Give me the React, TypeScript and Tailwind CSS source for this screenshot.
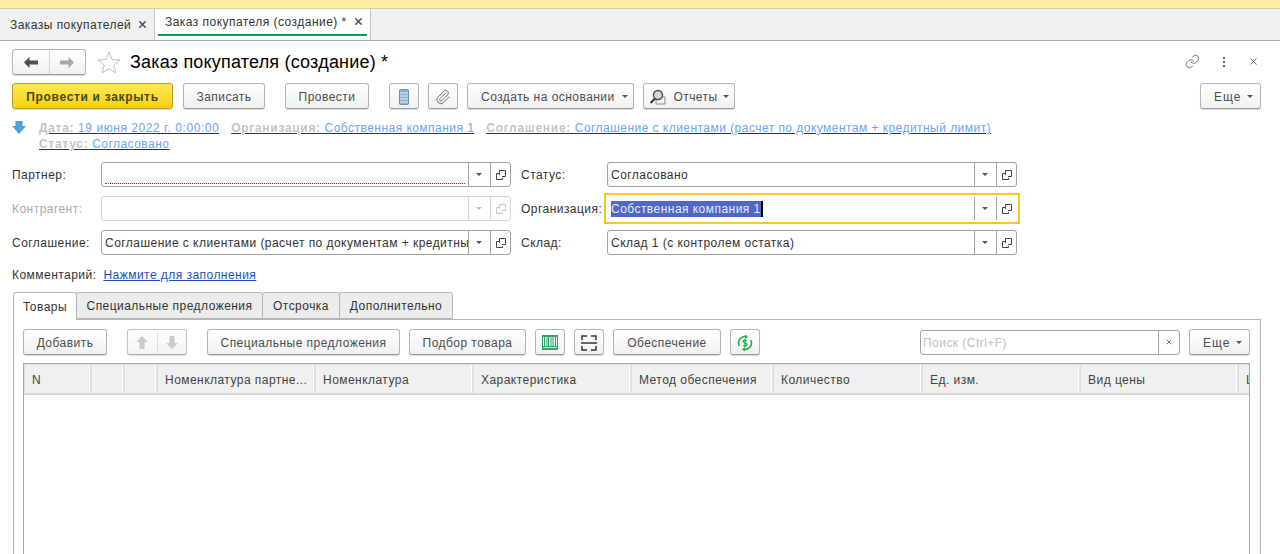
import React from "react";
import { Link, Paperclip, X } from "lucide-react";

const btn =
	"flex h-[26px] shrink-0 items-center justify-center rounded-[3px] border border-[#b5b5b5] border-b-[#9a9a9a] bg-gradient-to-b from-white to-[#f1f1f1] pt-px text-[#4d4d4d] shadow-[0_1px_1px_rgba(0,0,0,0.15)]";

function Caret({ className = "border-t-[#555]" }: { className?: string }) {
	return (
		<span
			className={`h-0 w-0 border-x-[3.5px] border-t-[3.5px] border-x-transparent ${className}`}
		/>
	);
}

function OpenIcon({ muted = false }: { muted?: boolean }) {
	const c = muted ? "#c4c4c4" : "#444";
	return (
		<svg width="10" height="10" viewBox="0 0 10 10" fill="none" stroke={c}>
			<path d="M3.500 5V.5h6v6H6" />
			<path d="M3 3.500H.5v6h6V8" />
		</svg>
	);
}

function Field({
	value,
	muted,
	required,
	focused,
}: {
	value?: string;
	muted?: boolean;
	required?: boolean;
	focused?: boolean;
}) {
	const frame = focused
		? "rounded-none border-transparent outline-2 outline-offset-[1px] outline-[#f9c81d]"
		: muted
			? "rounded-[3px] border-[#d6d6d6]"
			: "rounded-[3px] border-[#a3a3a3]";
	const sep = muted ? "border-[#d6d6d6]" : "border-[#a3a3a3]";
	return (
		<div
			className={`flex h-[25px] w-[410px] shrink-0 items-stretch border bg-white ${frame}`}
		>
			<div className="relative flex min-w-0 flex-1 items-center overflow-hidden pl-[3px] pr-[2px] whitespace-nowrap">
				{focused ? (
					<span className="border-r-2 border-black bg-[#5068c2] leading-[16px] text-[#e6e9f7]">
						{value}
					</span>
				) : (
					<span>{value}</span>
				)}
				{required && (
					<span className="absolute right-[3px] bottom-[2px] left-[3px] border-b border-dotted border-[#e02020]" />
				)}
			</div>
			<div className={`flex w-[22px] shrink-0 items-center justify-center border-l pr-px ${sep}`}>
				<Caret className={muted ? "border-t-[#bdbdbd]" : "border-t-[#555]"} />
			</div>
			<div className={`flex w-[20px] shrink-0 items-center justify-center border-l ${sep}`}>
				<OpenIcon muted={muted} />
			</div>
		</div>
	);
}

function DocIcon() {
	return (
		<svg width="10" height="16" viewBox="0 0 10 16">
			<rect x="0.5" y="0.5" width="9" height="15" rx="1" fill="#8fb3cf" stroke="#6d8ea8" />
			<path d="M1 4h8M1 7h8M1 10h8M1 13h8" stroke="#e4edf4" />
		</svg>
	);
}

function ReportIcon() {
	return (
		<svg width="18" height="16" viewBox="0 0 18 16" fill="none">
			<path d="M9 8h7v7H7v-4" fill="#f2f2f2" stroke="#8a8a8a" />
			<circle cx="9" cy="6" r="4.500" fill="#cfd8c9" stroke="#4b4b4b" strokeWidth="1.400" />
			<path d="M6 9.500 1.500 14" stroke="#333" strokeWidth="2" />
		</svg>
	);
}

function BarcodeIcon() {
	return (
		<svg width="16" height="15" viewBox="0 0 16 15">
			<rect width="16" height="15" fill="#2fa36b" />
			<rect x="1" y="2" width="14" height="9" fill="#f2faf5" />
			<path d="M2.500 2v9M5 2v9M6.500 2v9M9 2v9M11 2v9M13.500 2v9" stroke="#2fa36b" strokeWidth="1" />
			<path d="M1 12.500h14" stroke="#bfe6cf" />
		</svg>
	);
}

function ScanIcon() {
	return (
		<svg width="16" height="16" viewBox="0 0 16 16" fill="none" stroke="#333" strokeWidth="1.500">
			<path d="M1 5V1h5M10 1h5v4M0 8h16M1 11v4h5M10 15h5v-4" />
		</svg>
	);
}

function MoneyIcon() {
	return (
		<svg width="16" height="16" viewBox="0 0 16 16" fill="none" stroke="#1fae45" strokeWidth="1.600">
			<path d="M2.300 11A6.500 6.500 0 0 1 9 1.600" />
			<path d="M13.700 5A6.500 6.500 0 0 1 7 14.400" />
			<path d="M8 0l2.500 1.800L8 3.600M8 12.400l-2.500 1.800L8 16" fill="#1fae45" strokeWidth="0.800" />
			<path d="M10 5.600C9.500 4.900 6 4.600 6 6.400 6 8.200 10 7.600 10 9.600 10 11.300 6.600 11.100 6 10.400M8 3.800v8.400" strokeWidth="1.300" />
		</svg>
	);
}

function ArrowH({ dir, color }: { dir: "left" | "right"; color: string }) {
	return (
		<svg width="14" height="11" viewBox="0 0 14 11" fill={color}>
			{dir === "left" ? (
				<path d="M0 5.500 5.500 0v3.500H14v4H5.500V11z" />
			) : (
				<path d="M14 5.500 8.500 0v3.500H0v4h8.500V11z" />
			)}
		</svg>
	);
}

function ArrowV({ dir }: { dir: "up" | "down" }) {
	return (
		<svg width="12" height="13" viewBox="0 0 12 13" fill="#b9c0c4">
			{dir === "up" ? (
				<path d="M6 0l6 6H8.500v7h-5V6H0z" />
			) : (
				<path d="M6 13l6-6H8.500V0h-5v7H0z" />
			)}
		</svg>
	);
}

const columns: [string, number][] = [
	["N", 67],
	["", 33],
	["", 33],
	["Номенклатура партне...", 158],
	["Номенклатура", 158],
	["Характеристика", 158],
	["Метод обеспечения", 142],
	["Количество", 149],
	["Ед. изм.", 158],
	["Вид цены", 158],
	["Цена", 40],
];

function InfoPair({ label, value, wide }: { label: string; value: string; wide?: boolean }) {
	return (
		<span className="underline">
			<span className="font-bold tracking-[0.7px] text-[#c4c4c4]">{label}</span>{" "}
			<span className={wide ? "tracking-[0.55px] text-[#6ba4f8]" : "text-[#6ba4f8]"}>{value}</span>
		</span>
	);
}

export default function App() {
	return (
		<div
			className="flex h-[554px] w-[1280px] flex-col overflow-hidden bg-white text-[12px] tracking-[0.46px] text-[#333]"
			style={{ fontFamily: '"Liberation Sans", Arial, sans-serif' }}
		>
			<div className="h-[9px] shrink-0 border-b border-[#d9cf9c] bg-[#fdeea2]" />

			{/* открытые окна */}
			<div className="flex h-[32px] shrink-0 border-b border-[#a8a8a8] bg-[#f0f0f0]">
				<div className="flex w-[155px] items-center border-r border-[#c4c4c4] pl-[10px]">
					<span>Заказы покупателей</span>
					<X size={11} strokeWidth={3} className="ml-[6px] text-[#444]" />
				</div>
				<div className="flex w-[216px] flex-col border-r border-[#c4c4c4] bg-white">
					<div className="flex flex-1 items-center pl-[10px]">
						<span>Заказ покупателя (создание) *</span>
						<X size={11} strokeWidth={3} className="ml-[6px] text-[#444]" />
					</div>
					<div className="mx-[3px] mb-[4px] h-[2px] bg-[#0e9a52]" />
				</div>
			</div>

			<div className="flex min-h-0 flex-1 flex-col pr-[19px] pl-[12px]">
				{/* заголовок */}
				<div className="mt-[8px] flex h-[25px] shrink-0 items-center">
					<div className={`${btn} h-[25px] w-[74px]`}>
						<div className="flex h-full flex-1 items-center justify-center">
							<ArrowH dir="left" color="#4f4f4f" />
						</div>
						<div className="flex h-full flex-1 items-center justify-center border-l border-[#d5d5d5]">
							<ArrowH dir="right" color="#a8a8a8" />
						</div>
					</div>
					<svg className="ml-[11px]" width="24" height="22" viewBox="0 0 24 22" fill="white" stroke="#bdbdbd">
						<path d="M12 1l3 7.500 8 .6-6.200 5 2 7.900L12 17.600 5.200 22l2-7.900-6.200-5 8-.6z" />
					</svg>
					<h1 className="ml-[9px] text-[18px] leading-none tracking-[0.2px] text-black">
						Заказ покупателя (создание) *
					</h1>
					<div className="ml-auto flex items-center text-[#555]">
						<Link size={15} strokeWidth={1.300} />
						<div className="ml-[23px] flex flex-col gap-[2px]">
							<span className="h-[2px] w-[2px] bg-[#666]" />
							<span className="h-[2px] w-[2px] bg-[#666]" />
							<span className="h-[2px] w-[2px] bg-[#666]" />
						</div>
						<X size={11} strokeWidth={1.800} className="mr-[2px] ml-[23px]" />
					</div>
				</div>

				{/* команды */}
				<div className="mt-[9px] flex shrink-0 items-center">
					<button className="flex h-[26px] w-[161px] items-center justify-center rounded-[3px] border border-[#b59f2c] bg-gradient-to-b from-[#ffe94f] to-[#f5d000] pt-px font-bold tracking-[0.67px] text-[#4a4a20] shadow-[0_1px_1px_rgba(0,0,0,0.15)]">
						Провести и закрыть
					</button>
					<button className={`${btn} ml-[10px] w-[82px]`}>Записать</button>
					<button className={`${btn} ml-[20px] w-[84px]`}>Провести</button>
					<button className={`${btn} ml-[20px] w-[30px]`}>
						<DocIcon />
					</button>
					<button className={`${btn} ml-[9px] w-[30px]`}>
						<Paperclip size={16} strokeWidth={1.200} className="text-[#555]" />
					</button>
					<button className={`${btn} ml-[9px] w-[167px] !justify-start gap-[7px] pl-[13px]`}>
						<span>Создать на основании</span>
						<Caret />
					</button>
					<button className={`${btn} ml-[9px] w-[92px]`}>
						<ReportIcon />
						<span className="ml-[6px]">Отчеты</span>
						<span className="ml-[5px] flex">
							<Caret />
						</span>
					</button>
					<button className={`${btn} ml-auto w-[61px] !justify-start gap-[6px] pl-[13px]`}>
						<span className="tracking-[1px]">Еще</span>
						<Caret />
					</button>
				</div>

				{/* шапка документа */}
				<div className="mt-[11px] flex shrink-0">
					<svg className="mt-[1px] shrink-0" width="14" height="13" viewBox="0 0 14 13" fill="#4ba3e3">
						<path d="M3.500 0h7v5H14l-7 8-7-8h3.500z" />
					</svg>
					<div className="ml-[13px] leading-[16px]">
						<div className="flex gap-[12px]">
							<InfoPair label="Дата:" value="19 июня 2022 г. 0:00:00" wide />
							<InfoPair label="Организация:" value="Собственная компания 1" />
							<InfoPair label="Соглашение:" value="Соглашение с клиентами (расчет по документам + кредитный лимит)" />
						</div>
						<InfoPair label="Статус:" value="Согласовано" />
					</div>
				</div>

				{/* реквизиты */}
				<div className="mt-[10px] flex shrink-0 flex-col gap-[9px]">
					<div className="flex items-center">
						<span className="w-[89px]">Партнер:</span>
						<Field required />
						<span className="ml-[10px] w-[86px]">Статус:</span>
						<Field value="Согласовано" />
					</div>
					<div className="flex items-center">
						<span className="w-[89px] text-[#a8a8a8]">Контрагент:</span>
						<Field muted />
						<span className="ml-[10px] w-[86px]">Организация:</span>
						<Field value="Собственная компания 1" focused />
					</div>
					<div className="flex items-center">
						<span className="w-[89px]">Соглашение:</span>
						<Field value="Соглашение с клиентами (расчет по документам + кредитный лимит)" />
						<span className="ml-[10px] w-[86px]">Склад:</span>
						<Field value="Склад 1 (с контролем остатка)" />
					</div>
				</div>

				<div className="mt-[12px] flex h-[16px] shrink-0 items-center">
					<span>Комментарий:</span>
					<a className="ml-[7px] text-[#1d4fc4] underline">Нажмите для заполнения</a>
				</div>

				{/* закладки */}
				<div className="mt-[9px] ml-[1px] flex h-[28px] shrink-0 items-stretch">
					<div className="relative z-10 flex h-[28px] w-[64px] items-center justify-center rounded-t-[3px] border border-b-0 border-[#b5b5b5] bg-white">
						Товары
					</div>
					<div className="-ml-px flex h-[27px] w-[187px] items-center justify-center rounded-t-[3px] border border-[#b5b5b5] bg-[#ececec]">
						Специальные предложения
					</div>
					<div className="-ml-px flex h-[27px] w-[78px] items-center justify-center rounded-t-[3px] border border-[#b5b5b5] bg-[#ececec]">
						Отсрочка
					</div>
					<div className="-ml-px flex h-[27px] w-[114px] items-center justify-center rounded-t-[3px] border border-[#b5b5b5] bg-[#ececec]">
						Дополнительно
					</div>
				</div>

				<div className="-mt-px ml-[1px] flex h-[300px] w-[1248px] shrink-0 flex-col border border-[#b5b5b5] px-[9px] pt-[9px]">
					<div className="flex shrink-0 items-center">
						<button className={`${btn} w-[84px]`}>Добавить</button>
						<div className={`${btn} ml-[20px] w-[60px] opacity-80`}>
							<div className="flex h-full flex-1 items-center justify-center">
								<ArrowV dir="up" />
							</div>
							<div className="flex h-full flex-1 items-center justify-center border-l border-[#d5d5d5]">
								<ArrowV dir="down" />
							</div>
						</div>
						<button className={`${btn} ml-[20px] w-[193px]`}>Специальные предложения</button>
						<button className={`${btn} ml-[9px] w-[117px]`}>Подбор товара</button>
						<button className={`${btn} ml-[9px] w-[30px]`}>
							<BarcodeIcon />
						</button>
						<button className={`${btn} ml-[9px] w-[30px]`}>
							<ScanIcon />
						</button>
						<button className={`${btn} ml-[9px] w-[108px]`}>Обеспечение</button>
						<button className={`${btn} ml-[9px] w-[30px]`}>
							<MoneyIcon />
						</button>
						<div className="ml-[160px] flex h-[25px] w-[260px] items-stretch rounded-[3px] border border-[#a3a3a3] bg-white">
							<span className="flex flex-1 items-center pt-px pl-[2px] text-[#c0c0c0]">Поиск (Ctrl+F)</span>
							<span className="flex w-[21px] items-center justify-center border-l border-[#a3a3a3]">
								<X size={8} strokeWidth={2.500} className="text-[#555]" />
							</span>
						</div>
						<button className={`${btn} ml-[9px] w-[61px] !justify-start gap-[6px] pl-[13px]`}>
							<span className="tracking-[1px]">Еще</span>
							<Caret />
						</button>
					</div>

					{/* табличная часть */}
					<div className="mt-[8px] min-h-0 w-[1227px] flex-1 overflow-hidden border-x border-t border-[#a8a8a8]">
						<div className="flex h-[31px] border-b border-[#cfcfcf]">
							{columns.map(([title, w], i) => (
								<div
									key={i}
									className="flex shrink-0 items-center overflow-hidden border-r-2 border-white bg-[#f0f0f0] pt-px pl-[8px] text-[#444] outline outline-[#e0e0e0] -outline-offset-1 whitespace-nowrap"
									style={{ width: w }}
								>
									{title}
								</div>
							))}
						</div>
					</div>
				</div>
			</div>
		</div>
	);
}
